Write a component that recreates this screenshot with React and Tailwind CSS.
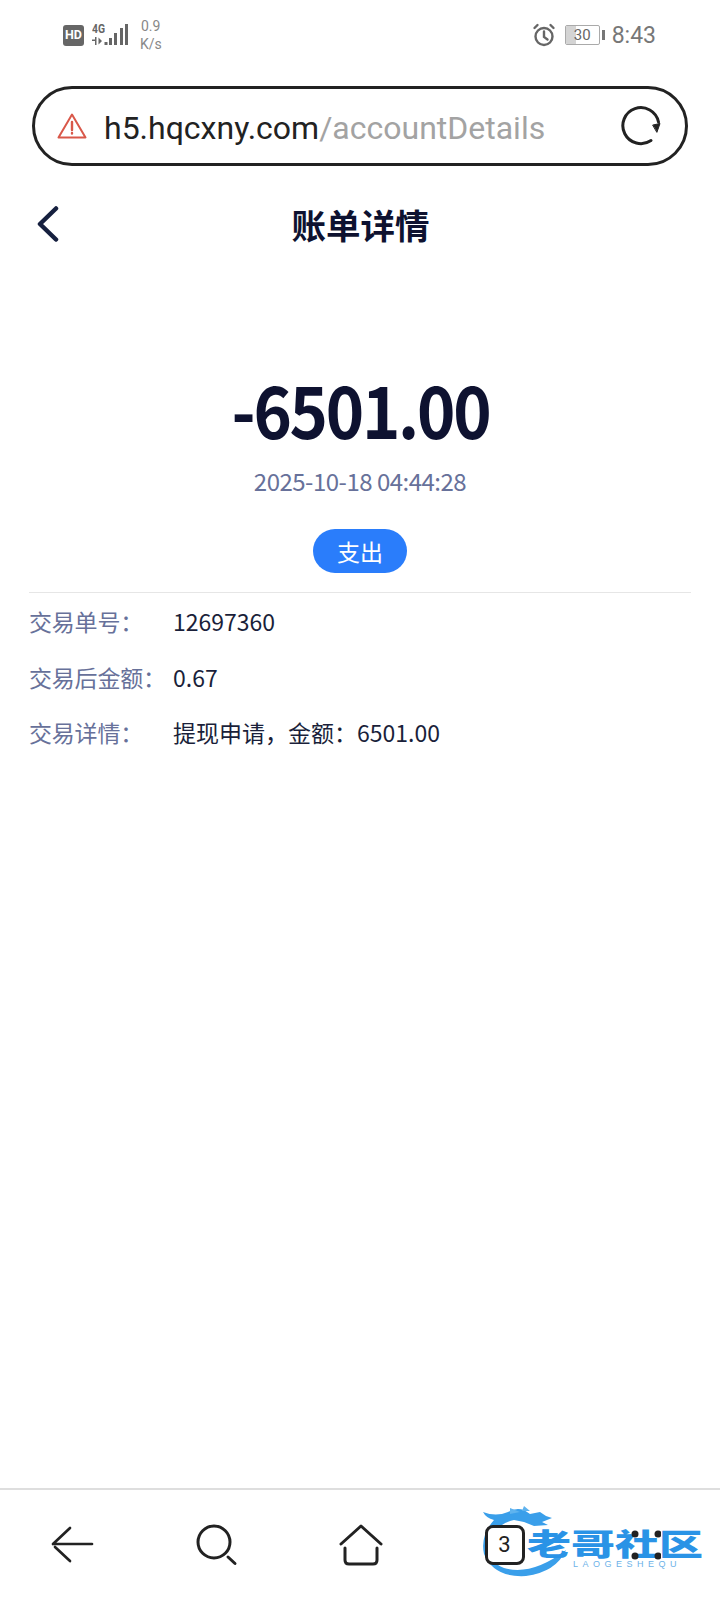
export default function App() {
  const cjk = { fontFamily: '"Noto Sans CJK SC", "Noto Sans", sans-serif' };
  const rows = [
    ['交易单号：', '12697360'],
    ['交易后金额：', '0.67'],
    ['交易详情：', '提现申请，金额：6501.00'],
  ];
  return (
    <div className="relative w-[720px] h-[1600px] bg-white flex flex-col overflow-hidden font-['Noto_Sans_CJK_SC',sans-serif]">
      {/* status bar */}
      <div className="h-[86px] shrink-0 flex items-start justify-between pt-[17px] pl-[63px] pr-[64px] font-['Roboto',sans-serif] text-[#777]">
        <div className="flex items-center h-[36px] gap-[8px]">
          <div className="w-[21px] h-[21px] rounded-[3px] bg-[#666] flex items-center justify-center text-white text-[12.500px] font-bold leading-none">HD</div>
          <svg width="37" height="24" viewBox="0 0 37 24" fill="#666">
            <text x="0" y="10" fontSize="12" fontWeight="700" fontFamily="Roboto" textLength="13" lengthAdjust="spacingAndGlyphs">4G</text>
            <path d="M0 16.500h3.500v1.500H0zM3 14h1.500v8H3zM6.500 14.500v7l3.500-3.500zM12.500 19h3v3h-3zM17 15h3v7h-3zM22 10h3v12h-3zM28 5h3v17h-3zM33 1h3v21h-3z" />
          </svg>
          <div className="ml-[3px] flex flex-col items-start text-[14px] leading-[18px] text-[#888]">
            <span className="ml-[1px]">0.9</span>
            <span>K/s</span>
          </div>
        </div>
        <div className="flex items-center h-[36px]">
          <svg width="24" height="24" viewBox="0 0 24 24" fill="none" stroke="#666" strokeWidth="2.400" strokeLinecap="round" className="mr-[9px]">
            <circle cx="12" cy="13.500" r="8.500" />
            <path d="M12 8.500v5.500l3.500 2.500M2.500 5l3-3M21.500 5l-3-3" />
          </svg>
          <div className="relative w-[35px] h-[20px] rounded-[2px] border border-[#aaa] flex items-center justify-center overflow-hidden text-[15px] leading-none text-[#666]">
            <div className="absolute left-0 top-0 bottom-0 w-[10px] bg-[#d4d4d4]" />
            <span className="relative">30</span>
          </div>
          <div className="w-[3px] h-[10px] ml-[2px] bg-[#777]" />
          <span className="ml-[7px] text-[23px] leading-none text-[#777]">8:43</span>
        </div>
      </div>

      {/* url bar */}
      <div className="mx-[32px] h-[80px] shrink-0 rounded-[40px] border-[3px] border-[#222] flex items-center pl-[22px] pr-[24px]">
        <svg width="30" height="28" viewBox="0 0 30 28" fill="none" stroke="#d9584a" strokeWidth="2" strokeLinejoin="round" strokeLinecap="round">
          <path d="M15 2.500 L28.500 25.500 H1.500 Z" />
          <path d="M15 10v8M15 21v0.500" strokeWidth="2.400" />
        </svg>
        <div className="ml-[17px] flex-1 font-['Roboto',sans-serif] text-[32px] leading-none pt-[4px]">
          <span className="text-[#222]">h5.hqcxny.com</span>
          <span className="text-[#a3a3a3]">/accountDetails</span>
        </div>
        <svg width="40" height="40" viewBox="0 0 40 40" fill="none" stroke="#222" strokeWidth="3" strokeLinecap="round">
          <path d="M37.500 16 A18 18 0 1 0 30 34.500" />
          <path d="M32 19 L39 17.500 L36 26 Z" fill="#222" stroke="#222" strokeWidth="1" strokeLinejoin="round" />
        </svg>
      </div>

      {/* header */}
      <div className="relative h-[64px] mt-[26px] shrink-0 flex items-center justify-center">
        <svg className="absolute left-[36px] top-[14px]" width="24" height="36" viewBox="0 0 24 36" fill="none" stroke="#16203f" strokeWidth="4.500" strokeLinecap="round" strokeLinejoin="round">
          <path d="M20 2.500 L4 18 L20 33.500" />
        </svg>
        <h1 className="text-[34.500px] leading-none font-bold text-[#0e1230] pl-[1px]" style={cjk}>账单详情</h1>
      </div>

      {/* amount */}
      <div className="mt-[116px] flex flex-col items-center">
        <div className="text-[72px] leading-[72px] font-bold text-[#0e1230] tracking-[-2.500px] scale-x-[0.905]" style={cjk}>-6501.00</div>
        <div className="mt-[21px] text-[24px] leading-[32px] text-[#67719a] tracking-[-0.500px]" style={cjk}>2025-10-18 04:44:28</div>
        <div className="mt-[32px] w-[94px] h-[44px] rounded-full bg-[#2a7dfb] flex items-center justify-center text-white text-[23px] leading-none" style={cjk}>支出</div>
      </div>

      {/* details */}
      <div className="mx-[29px] mt-[19px] border-t border-[#e6e6e6] pt-[1px] flex flex-col">
        {rows.map(([k, v]) => (
          <div key={k} className="h-[55.500px] flex items-center text-[23px] leading-none" style={cjk}>
            <span className="w-[144px] shrink-0 text-[#67719a] tracking-[-0.200px]">{k}</span>
            <span className="text-[#1a1f3a]">{v}</span>
          </div>
        ))}
      </div>

      {/* bottom nav */}
      <div className="mt-auto h-[112px] shrink-0 border-t-2 border-[#dedede] relative flex items-center justify-between pl-[50px] pr-[59px]">
        <svg width="44" height="40" viewBox="0 0 44 40" fill="none" stroke="#222" strokeWidth="2.700" strokeLinecap="round" strokeLinejoin="round">
          <path d="M3 19 L20 3 M5 22 L20 36 M3 19 H42" />
        </svg>
        <svg width="42" height="42" viewBox="0 0 42 42" fill="none" stroke="#222" strokeWidth="3" strokeLinecap="round">
          <circle cx="18" cy="18" r="16" />
          <path d="M32 33 L39 39.500" />
        </svg>
        <svg width="44" height="42" viewBox="0 0 44 42" fill="none" stroke="#222" strokeWidth="3" strokeLinecap="round" strokeLinejoin="round">
          <path d="M2 20 L22 2 L42 20" />
          <path d="M6 24 V36 Q6 40 10 40 H34 Q38 40 38 36 V24" />
        </svg>
        <div className="w-[40px] h-[40px] rounded-[8px] border-[3px] border-[#222] bg-white flex items-center justify-center text-[22px] leading-none text-[#222] font-['Roboto',sans-serif] relative z-10">3</div>
        <svg width="35" height="30" viewBox="0 0 35 30" fill="#222" className="relative z-10">
          <circle cx="9" cy="4" r="3.500" /><circle cx="32" cy="4" r="3.500" />
          <circle cx="9" cy="26" r="3.500" /><circle cx="32" cy="26" r="3.500" />
        </svg>

        {/* watermark */}
        <div className="absolute left-[480px] top-[14px] w-[225px] h-[84px]">
          <svg className="absolute left-0 top-0" width="100" height="76" viewBox="0 0 100 76" fill="none">
            <path d="M3 8 Q16 13 28 8 Q36 3 44 6 L50 10 L60 8 L66 12 L72 14 L62 18 L68 21 L54 22 L44 18 L34 16 Q16 20 8 38 Q4 56 24 64 Q52 72 86 46 Q76 68 46 72 Q14 74 4 50 Q0 32 14 16 Q6 14 3 8 Z" fill="#3a9fea" />
            <path d="M30 4 L40 8 L30 10 Z M44 2 L50 7 L42 7 Z" fill="#5fb3ee" />
          </svg>
          <div className="absolute left-[47px] top-[13px] text-[44px] leading-[50px] font-black text-[#2a93e6] whitespace-nowrap scale-y-[0.68]" style={cjk}>老哥社区</div>
          <div className="absolute left-[93px] top-[55px] text-[9px] leading-[10px] text-[#6db2e8] tracking-[4.500px] whitespace-nowrap font-['Liberation_Sans',sans-serif]">LAOGESHEQU</div>
        </div>
      </div>
    </div>
  );
}
